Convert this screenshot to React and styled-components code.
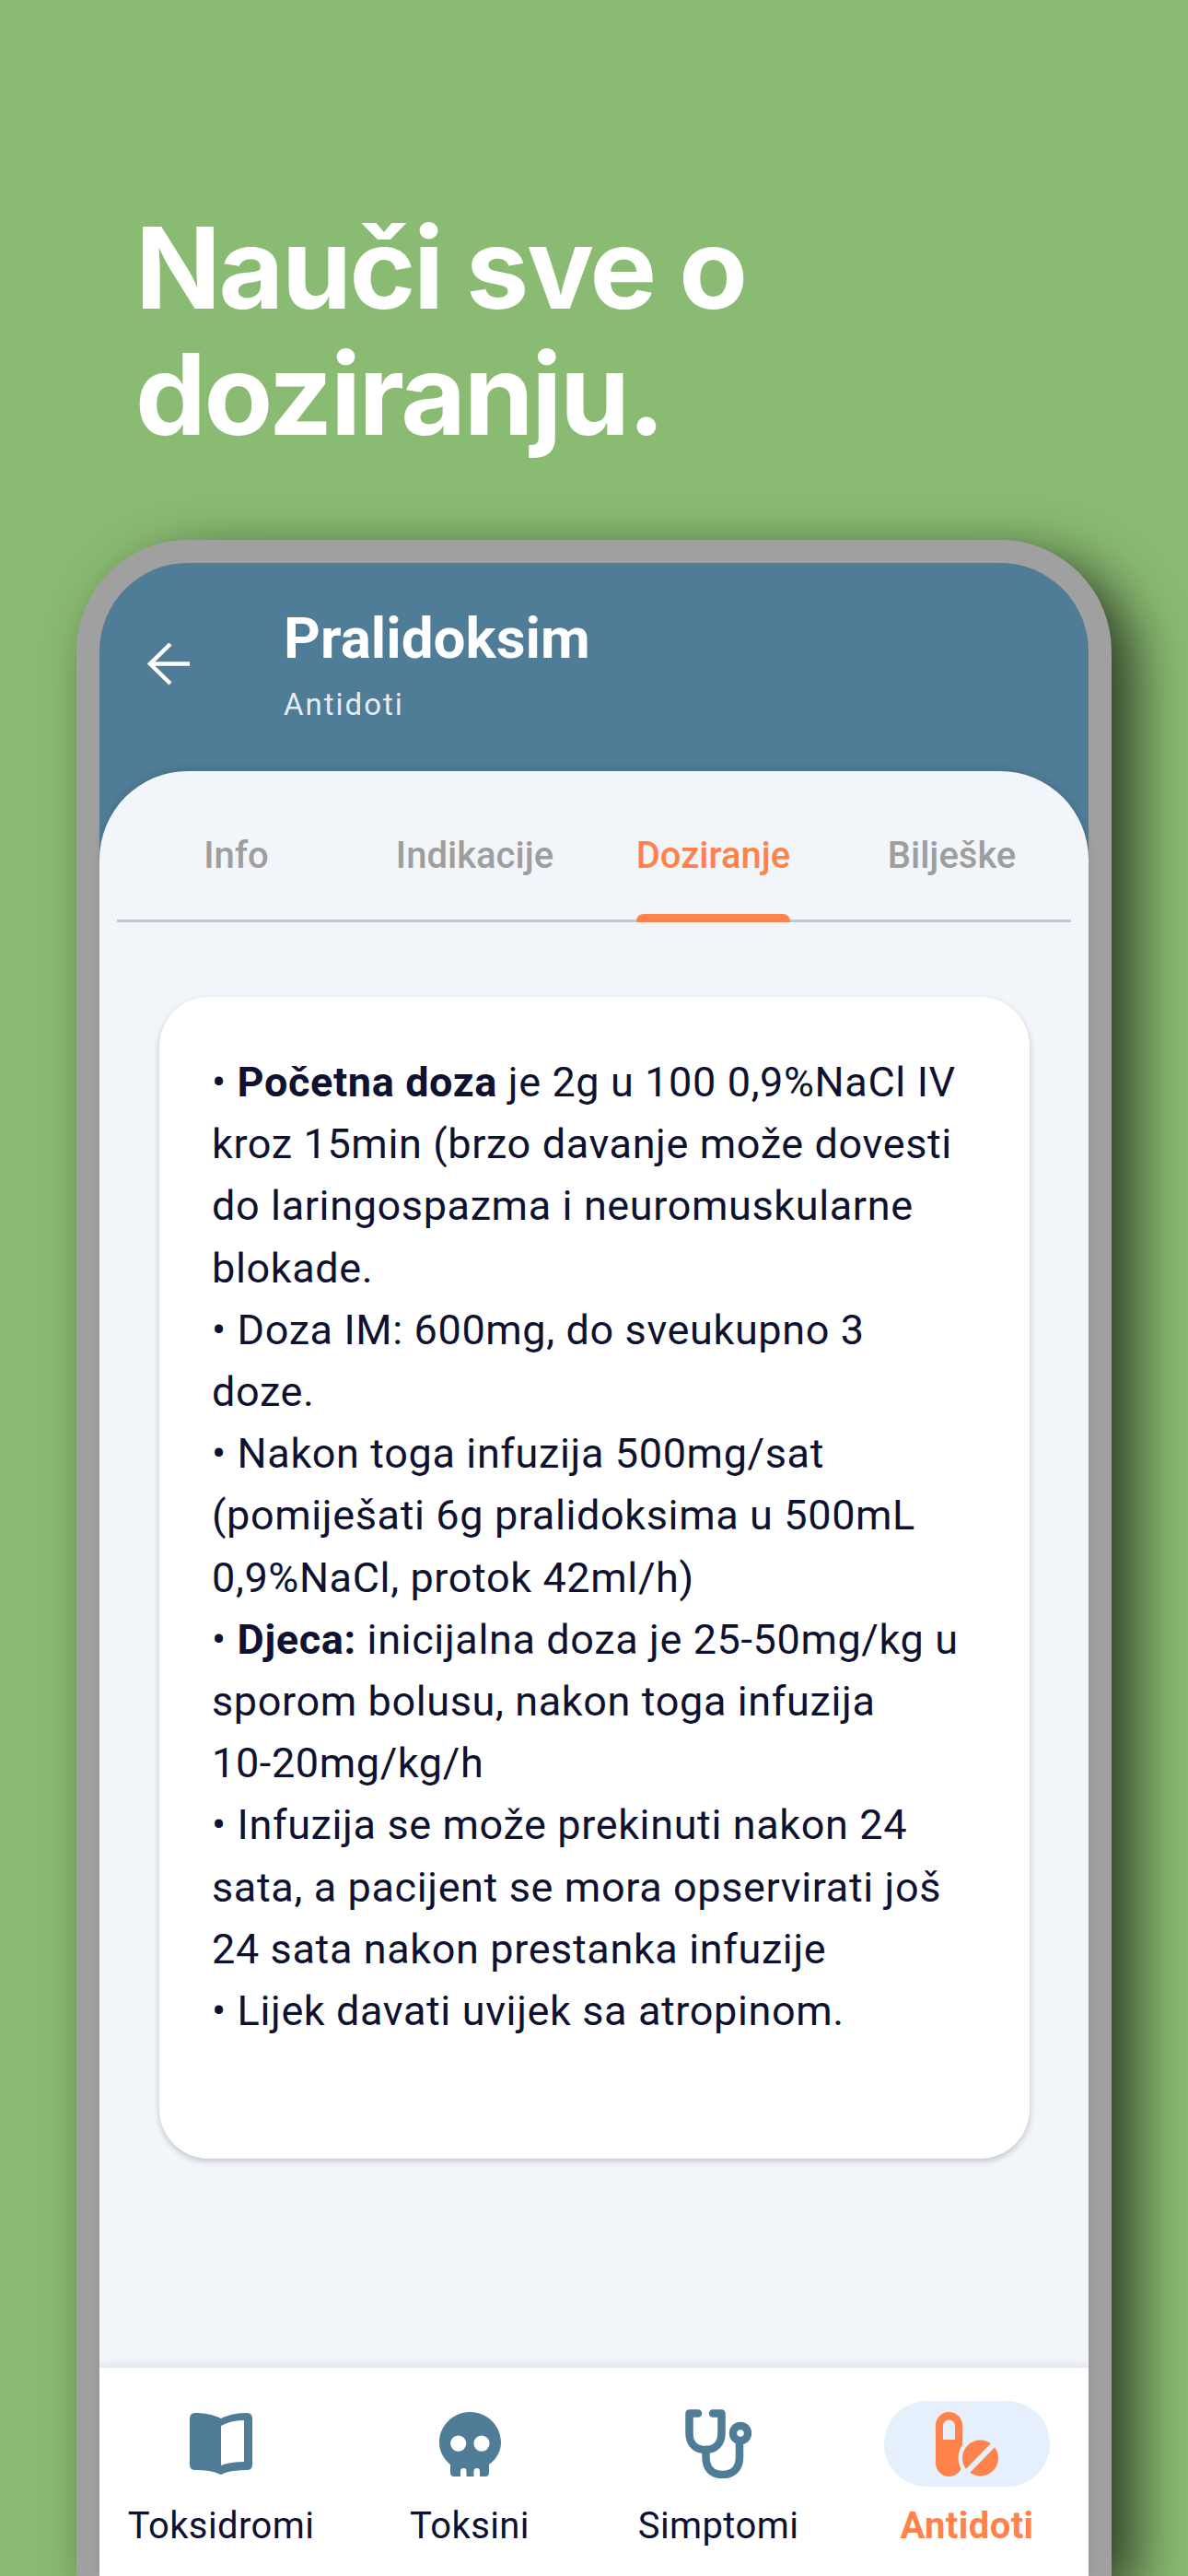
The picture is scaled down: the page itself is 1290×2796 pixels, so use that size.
import React from 'react';
import styled, { createGlobalStyle } from 'styled-components';

const colors = {
  green: '#8abb72',
  blue: '#4f7c96',
  orange: '#ff824a',
  ink: '#0e1230',
  sheet: '#f2f5fa',
  pill: '#e6f0fc',
};

const GlobalStyle = createGlobalStyle`
  html, body {
    margin: 0;
    padding: 0;
    background: ${colors.green};
  }
`;

const Page = styled.div`
  width: 1290px;
  height: 2796px;
  overflow: hidden;
  background: ${colors.green};
  display: flex;
  flex-direction: column;
  font-family: Roboto, "Noto Sans", sans-serif;
`;

const Headline = styled.h1`
  margin: 0;
  padding: 222px 147px 0;
  height: 586px;
  flex-shrink: 0;
  box-sizing: border-box;
  font-family: Inter, "Noto Sans", sans-serif;
  font-size: 122px;
  line-height: 137px;
  font-weight: 700;
  letter-spacing: -2.4px;
  color: #fff;
`;

const Phone = styled.div`
  flex: 1;
  min-height: 0;
  width: 1124px;
  margin-left: 83px;
  box-sizing: border-box;
  border: 25px solid #a0a0a0;
  border-bottom: none;
  border-radius: 121px 121px 0 0;
  background: ${colors.blue};
  box-shadow: 26px 20px 60px rgba(0, 0, 0, 0.68);
  display: flex;
  flex-direction: column;
`;

const Header = styled.header`
  height: 226px;
  flex-shrink: 0;
  display: flex;
  align-items: flex-start;
  padding: 56px 0 0 52px;
  box-sizing: border-box;
  color: #fff;
`;

const BackIcon = styled.svg`
  width: 46px;
  height: 46px;
  margin-top: 31px;
  margin-right: 102px;
  flex-shrink: 0;
`;

const TitleBlock = styled.div`
  display: flex;
  flex-direction: column;
`;

const Title = styled.div`
  font-size: 62px;
  line-height: 52px;
  font-weight: 700;
`;

const Subtitle = styled.div`
  margin-top: 27px;
  font-size: 33px;
  line-height: 38px;
  letter-spacing: 2px;
  color: #e6edf2;
`;

const Sheet = styled.div`
  flex: 1;
  min-height: 0;
  background: ${colors.sheet};
  border-radius: 96px 96px 0 0;
  box-shadow: 0 -2px 8px rgba(0, 0, 0, 0.1);
  display: flex;
  flex-direction: column;
  overflow: hidden;
`;

const Tabs = styled.nav`
  height: 164px;
  flex-shrink: 0;
  margin: 0 19px 0 19px;
  box-sizing: border-box;
  border-bottom: 3px solid #c4c8d0;
  display: grid;
  grid-template-columns: repeat(4, 1fr);
`;

const Tab = styled.div`
  display: flex;
  justify-content: center;
  padding-top: 65px;
`;

const TabLabel = styled.span`
  position: relative;
  height: 96px;
  font-size: 40px;
  line-height: 54px;
  font-weight: 500;
  color: ${props => (props.$active ? colors.orange : '#9e9e9e')};

  ${props => props.$active && `
    &::after {
      content: '';
      position: absolute;
      left: 0;
      right: 0;
      bottom: -3px;
      height: 9px;
      border-radius: 8px 8px 0 0;
      background: ${colors.orange};
    }
  `}
`;

const Content = styled.main`
  flex: 1;
  min-height: 0;
  padding: 81px 64px 0 65px;
`;

const Card = styled.article`
  height: 1261px;
  box-sizing: border-box;
  padding: 59px 70px 0 57px;
  background: #fff;
  border-radius: 54px;
  box-shadow: 0 3px 7px rgba(0, 0, 0, 0.2);
  font-size: 45px;
  line-height: 67.2px;
  letter-spacing: 0.62px;
  color: ${colors.ink};
`;

const Line = styled.div``;

const NoBreak = styled.span`
  white-space: nowrap;
`;

const BottomNav = styled.nav`
  position: relative;
  height: 226px;
  flex-shrink: 0;
  background: #fff;
  box-shadow: 0 -3px 10px rgba(0, 0, 0, 0.08);
  display: grid;
  grid-template-columns: repeat(4, 270px);
  justify-content: center;
`;

const NavItem = styled.div`
  display: flex;
  flex-direction: column;
  align-items: center;
  padding-top: 36px;
`;

const IconSlot = styled.div`
  width: ${props => (props.$active ? '180px' : '100px')};
  height: 93px;
  border-radius: 47px;
  background: ${props => (props.$active ? colors.pill : 'transparent')};
  display: flex;
  align-items: center;
  justify-content: center;
`;

const NavLabel = styled.span`
  margin-top: 18px;
  font-size: 40px;
  line-height: 50px;
  letter-spacing: 0.4px;
  font-weight: ${props => (props.$active ? 700 : 400)};
  color: ${props => (props.$active ? colors.orange : colors.ink)};
`;

const BookIcon = () => (
  <svg width="68" height="67" viewBox="0 0 68 67">
    <path
      fill={colors.blue}
      fillRule="evenodd"
      d="M6 0 C16 0 26 2 34 6 C42 2 52 0 62 0 Q68 0 68 6 V56 Q68 62 62 62 C52 62 42 63 34 67 C26 63 16 62 6 62 Q0 62 0 56 V6 Q0 0 6 0 Z M34 14 V57 C41 54 50 53 59 53 V8 C50 8 41 10 34 14 Z"
    />
  </svg>
);

const SkullIcon = () => (
  <svg width="67" height="70" viewBox="0 0 67 70">
    <path
      fill={colors.blue}
      fillRule="evenodd"
      d="M33.5 0 C52 0 67 15 67 33 C67 43 62 51 54 57 V66 Q54 70 50 70 H44 V64 Q44 61 41 61 Q37.5 61 37.5 64 V70 H29.5 V64 Q29.5 61 26.5 61 Q23 61 23 64 V70 H16 Q12 70 12 66 V57 C5 51 0 43 0 33 C0 15 15 0 33.5 0 Z M20.7 25.5 A8.6 8.6 0 1 0 20.7 42.7 A8.6 8.6 0 1 0 20.7 25.5 Z M46 25.5 A8.6 8.6 0 1 0 46 42.7 A8.6 8.6 0 1 0 46 25.5 Z"
    />
  </svg>
);

const StethoscopeIcon = () => (
  <svg width="72" height="75" viewBox="0 0 72 75" fill="none" stroke={colors.blue} strokeWidth="8.5" strokeLinecap="round" strokeLinejoin="round">
    <path d="M14 4.5 H4.5 V26 C4.5 38 12 44 22 44 C32 44 39.5 38 39.5 26 V4.5 H30" />
    <path d="M22.5 44 V52 C22.5 64 29 71 40.5 71 C52 71 59 64 59 52 V38" />
    <circle cx="60" cy="26" r="8" />
  </svg>
);

const PillIcon = () => (
  <svg width="68" height="70" viewBox="0 0 68 70">
    <rect x="0" y="0" width="29" height="70" rx="14.5" fill={colors.orange} />
    <path d="M8 30 V15 A6.5 6.5 0 0 1 21 15 V30 Z" fill={colors.pill} />
    <circle cx="48.5" cy="50" r="24" fill={colors.pill} />
    <circle cx="48.5" cy="50" r="19.5" fill={colors.orange} />
    <path d="M30 69 L67 31" stroke={colors.pill} strokeWidth="6" />
  </svg>
);

const tabs = ['Info', 'Indikacije', 'Doziranje', 'Bilješke'];

const navItems = [
  { label: 'Toksidromi', icon: <BookIcon /> },
  { label: 'Toksini', icon: <SkullIcon /> },
  { label: 'Simptomi', icon: <StethoscopeIcon /> },
  { label: 'Antidoti', icon: <PillIcon />, active: true },
];

const App = () => (
  <Page>
    <GlobalStyle />
    <Headline>
      Nauči sve o
      <br />
      doziranju.
    </Headline>
    <Phone>
      <Header>
        <BackIcon viewBox="0 0 46 46" fill="none" stroke="#fff" strokeWidth="4.5">
          <path d="M46 22.5 H3 M25 1 L3 22.5 L25 44" />
        </BackIcon>
        <TitleBlock>
          <Title>Pralidoksim</Title>
          <Subtitle>Antidoti</Subtitle>
        </TitleBlock>
      </Header>
      <Sheet>
        <Tabs>
          {tabs.map(tab => (
            <Tab key={tab}>
              <TabLabel $active={tab === 'Doziranje'}>{tab}</TabLabel>
            </Tab>
          ))}
        </Tabs>
        <Content>
          <Card>
            <Line>• <b>Početna doza</b> je 2g u 100 0,9%NaCl IV kroz 15min (brzo davanje može dovesti do laringospazma i neuromuskularne blokade.</Line>
            <Line>• Doza IM: 600mg, do sveukupno 3 doze.</Line>
            <Line>• Nakon toga infuzija 500mg/sat (pomiješati 6g pralidoksima u 500mL 0,9%NaCl, protok 42ml/h)</Line>
            <Line>• <b>Djeca:</b> inicijalna doza je 25-50mg/kg u sporom bolusu, nakon toga infuzija <NoBreak>10-20mg/kg/h</NoBreak></Line>
            <Line>• Infuzija se može prekinuti nakon 24 sata, a pacijent se mora opservirati još 24 sata nakon prestanka infuzije</Line>
            <Line>• Lijek davati uvijek sa atropinom.</Line>
          </Card>
        </Content>
        <BottomNav>
          {navItems.map(item => (
            <NavItem key={item.label}>
              <IconSlot $active={item.active}>{item.icon}</IconSlot>
              <NavLabel $active={item.active}>{item.label}</NavLabel>
            </NavItem>
          ))}
        </BottomNav>
      </Sheet>
    </Phone>
  </Page>
);

export default App;
